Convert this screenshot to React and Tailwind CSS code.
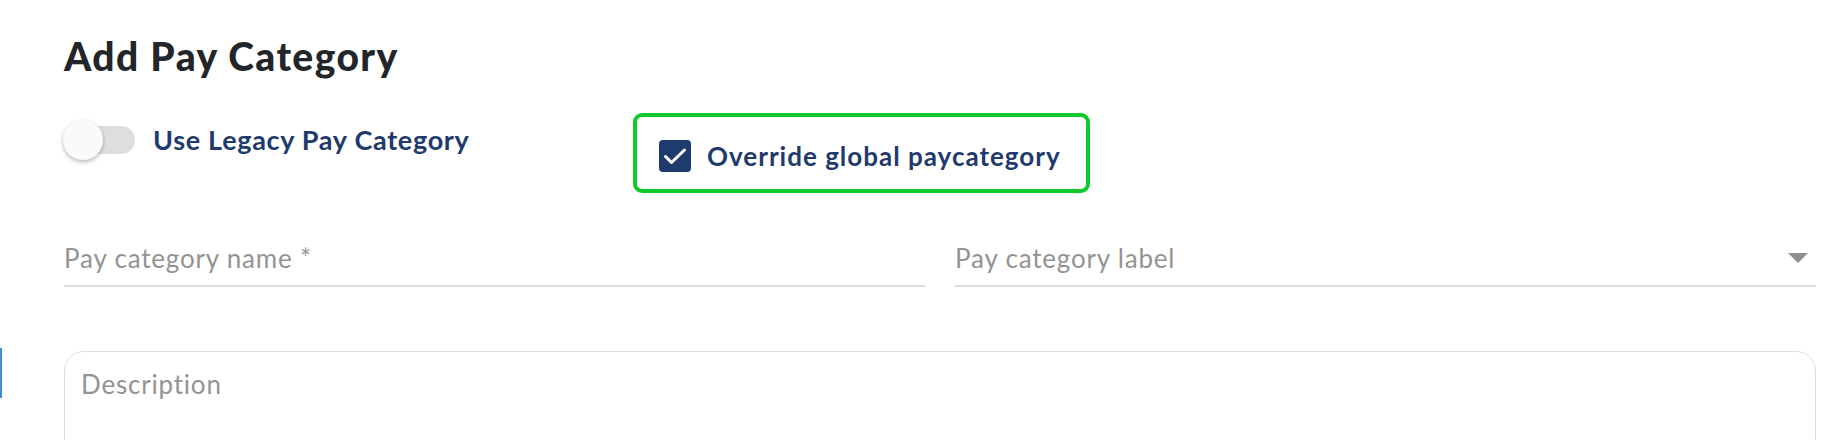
import { useState } from 'react';

const font = { fontFamily: 'Lato, "Noto Sans", sans-serif' };

function Toggle({ on, onChange }) {
  return (
    <button
      type="button"
      onClick={() => onChange(!on)}
      className="relative flex h-[40px] w-[72px] shrink-0 items-center"
    >
      <span className="block h-[28px] w-[71px] rounded-full bg-[#dedede]" />
      <span
        className={
          'absolute top-0 block h-[40px] w-[40px] rounded-full bg-[#fafafa] shadow-[0_2px_4px_rgba(0,0,0,0.28)] ' +
          (on ? 'left-[32px]' : 'left-[-1px]')
        }
      />
    </button>
  );
}

function Checkbox({ checked, onChange }) {
  return (
    <button
      type="button"
      onClick={() => onChange(!checked)}
      className="flex h-[32px] w-[32px] shrink-0 items-center justify-center rounded-[4px] bg-[#1f3a6d]"
    >
      {checked && (
        <svg width="32" height="32" viewBox="0 0 32 32" fill="none">
          <path d="M6.5 16.5l6 6L25.5 10" stroke="#fff" strokeWidth="3" strokeLinecap="round" strokeLinejoin="round" />
        </svg>
      )}
    </button>
  );
}

function Field({ label, select }) {
  return (
    <div className="flex h-[56px] flex-col justify-end">
      <div className="flex items-center justify-between border-b-2 border-[#dddddd] pb-[11px]">
        <span className="text-[26px] leading-[32px] tracking-[0.8px] text-[#939393]">{label}</span>
        {select && (
          <svg width="20" height="10" viewBox="0 0 20 10" className="mr-[8px]">
            <path d="M0 0h20L10 10z" fill="#8f8f8f" />
          </svg>
        )}
      </div>
    </div>
  );
}

export default function App() {
  const [legacy, setLegacy] = useState(false);
  const [override, setOverride] = useState(true);

  return (
    <div style={font} className="relative h-[440px] w-full overflow-hidden bg-white">
      <div className="absolute left-0 top-[348px] h-[50px] w-[2px] bg-[#3a8fd8]" />

      <div className="pl-[64px] pr-[32px] pt-[32px]">
        <h1 className="text-[39px] font-black leading-[48px] tracking-[1.4px] text-[#222529]">Add Pay Category</h1>

        <div className="mt-[33px] flex items-start">
          <div className="flex w-[569px] items-center gap-[17px] pt-[7px]">
            <Toggle on={legacy} onChange={setLegacy} />
            <span className="text-[27px] font-bold leading-[32px] tracking-[0.7px] text-[#1f3a6d]">
              Use Legacy Pay Category
            </span>
          </div>
          <div className="flex h-[80px] w-[457px] items-center gap-[16px] rounded-[9px] border-[4px] border-[#12c92b] pl-[22px] pt-[6px]">
            <Checkbox checked={override} onChange={setOverride} />
            <span className="text-[26px] font-bold leading-[32px] tracking-[1px] text-[#1f3a6d]">
              Override global paycategory
            </span>
          </div>
        </div>

        <div className="mt-[38px] grid grid-cols-2 gap-[30px]">
          <Field label="Pay category name *" />
          <Field label="Pay category label" select />
        </div>

        <div className="mt-[64px] h-[140px] rounded-[20px] border-[1.5px] border-[#dddddd] px-[16px] pt-[16px]">
          <span className="text-[26px] leading-[32px] tracking-[0.8px] text-[#939393]">Description</span>
        </div>
      </div>
    </div>
  );
}
